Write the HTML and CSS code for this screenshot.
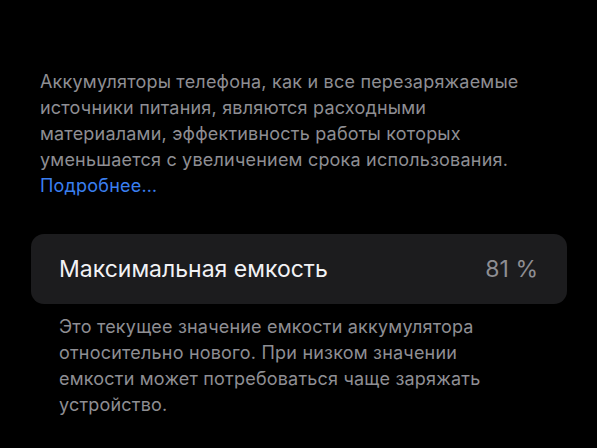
FILE: index.html
```html
<!DOCTYPE html>
<html lang="ru">
<head>
<meta charset="utf-8">
<link rel="stylesheet" href="styles.css">
</head>
<body>
<main class="screen">
  <p class="intro">Аккумуляторы телефона, как и все перезаряжаемые<br>источники питания, являются расходными<br>материалами, эффективность работы которых<br>уменьшается с увеличением срока использования.<br><a class="more" href="#">Подробнее…</a></p>
  <section class="card">
    <span class="label">Максимальная емкость</span>
    <span class="value">81 %</span>
  </section>
  <p class="note">Это текущее значение емкости аккумулятора<br>относительно нового. При низком значении<br>емкости может потребоваться чаще заряжать<br>устройство.</p>
</main>
</body>
</html>
```
FILE: styles.css
```css
html, body {
  margin: 0;
  padding: 0;
  background: #000;
}
body {
  width: 597px;
  height: 448px;
  overflow: hidden;
  font-family: Inter, Roboto, "Liberation Sans", sans-serif;
}
.screen {
  padding: 69px 30px 0 31px;
  display: flex;
  flex-direction: column;
}
.intro {
  margin: 0 0 35px 9px;
  font-size: 18px;
  letter-spacing: 0.2px;
  line-height: 26px;
  color: #8e8e93;
  white-space: nowrap;
}
.more {
  color: #3a7ff0;
  text-decoration: none;
}
.card {
  height: 70px;
  box-sizing: border-box;
  background: #1c1c1e;
  border-radius: 13px;
  display: flex;
  align-items: center;
  justify-content: space-between;
  padding: 0 29px 0 28px;
}
.label {
  color: #f2f2f5;
  font-size: 23px;
}
.value {
  color: #8e8e93;
  font-size: 23px;
}
.note {
  margin: 10px 0 0 28px;
  font-size: 18px;
  letter-spacing: 0.2px;
  line-height: 26px;
  color: #8e8e93;
  white-space: nowrap;
}
```
